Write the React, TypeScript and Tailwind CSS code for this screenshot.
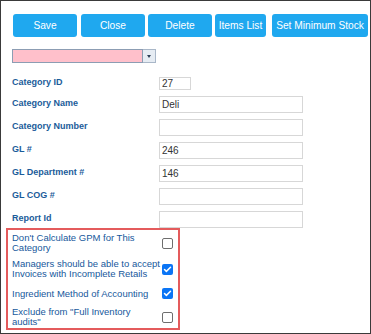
import { Check } from 'lucide-react'

const buttons = [
  { label: 'Save', w: 'w-[64px]', ml: 'ml-0' },
  { label: 'Close', w: 'w-[64px]', ml: 'ml-[4px]' },
  { label: 'Delete', w: 'w-[64px]', ml: 'ml-[3px]' },
  { label: 'Items List', w: 'w-[51px]', ml: 'ml-[3px]' },
  { label: 'Set Minimum Stock', w: 'w-[96px]', ml: 'ml-[6px]' },
]

const fields = [
  { label: 'Category Name', value: 'Deli' },
  { label: 'Category Number', value: '' },
  { label: 'GL #', value: '246' },
  { label: 'GL Department #', value: '146' },
  { label: 'GL COG #', value: '' },
  { label: 'Report Id', value: '' },
]

const options = [
  { text: ["Don't Calculate GPM for This", 'Category'], checked: false, mt: 'mt-[3px]' },
  { text: ['Managers should be able to accept', 'Invoices with Incomplete Retails'], checked: true, mt: 'mt-[6px]' },
  { text: ['Ingredient Method of Accounting'], checked: true, mt: 'mt-[9px]' },
  { text: ['Exclude from "Full Inventory', 'audits"'], checked: false, mt: 'mt-[8px]' },
]

function Box({ checked }: { checked: boolean }) {
  if (checked) {
    return (
      <span className="w-[11px] h-[11px] rounded-[2px] bg-[#0b75f5] flex items-center justify-center shrink-0">
        <Check className="w-[9px] h-[9px] text-white" strokeWidth={4} />
      </span>
    )
  }
  return <span className="w-[11px] h-[11px] rounded-[2px] border border-[#6e6e6e] bg-white shrink-0" />
}

export default function App() {
  return (
    <div
      className="w-[371px] h-[334px] border border-[#3a3a3a] bg-white overflow-hidden"
      style={{ fontFamily: '"Liberation Sans", Arial, sans-serif' }}
    >
      {/* Toolbar */}
      <div className="flex pl-[12px] pt-[13px]">
        {buttons.map((b) => (
          <button
            key={b.label}
            className={`${b.w} ${b.ml} h-[23px] rounded-[3px] bg-[#1fa8ef] text-white text-[10.2px] flex items-center justify-center whitespace-nowrap`}
          >
            {b.label}
          </button>
        ))}
      </div>

      {/* Dropdown */}
      <div className="flex ml-[11px] mt-[12px]">
        <div className="w-[131px] h-[14px] bg-[#ffc0cb] border border-[#8c9db3]" />
        <div className="w-[13px] h-[14px] bg-[#e6ecf3] border border-[#a9b7c8] border-l-0 flex items-center justify-center">
          <span className="w-0 h-0 border-l-[2.5px] border-r-[2.5px] border-t-[3px] border-l-transparent border-r-transparent border-t-[#2c3e55]" />
        </div>
      </div>

      {/* Fields */}
      <div className="pl-[11px] mt-[14px] flex flex-col">
        <div className="flex items-center h-[13px]">
          <span className="w-[147px] text-[9px] font-bold text-[#1b5c9a] -mt-[1px]">Category ID</span>
          <input
            readOnly
            value="27"
            className="w-[32px] h-[13px] border border-[#d7d7d7] text-[10px] text-[#333] pl-[2px] outline-none"
          />
        </div>
        {fields.map((f) => (
          <div key={f.label} className="flex items-center h-[17px] mt-[6px]">
            <span className="w-[147px] text-[9px] font-bold text-[#1b5c9a] -mt-[1px]">{f.label}</span>
            <input
              readOnly
              value={f.value}
              className="w-[144px] h-[17px] border border-[#d7d7d7] text-[10px] text-[#333] pl-[2px] outline-none"
            />
          </div>
        ))}
      </div>

      {/* Options */}
      <div className="ml-[5px] w-[174px] h-[102px] border-2 border-[#e45b5c] pl-[4px] pr-[5px] flex flex-col">
        {options.map((o, i) => (
          <div key={i} className={`${o.mt} flex items-center justify-between`}>
            <div className="text-[9.5px] leading-[10px] text-[#16589c]">
              {o.text.map((t) => (
                <div key={t}>{t}</div>
              ))}
            </div>
            <Box checked={o.checked} />
          </div>
        ))}
      </div>
    </div>
  )
}
